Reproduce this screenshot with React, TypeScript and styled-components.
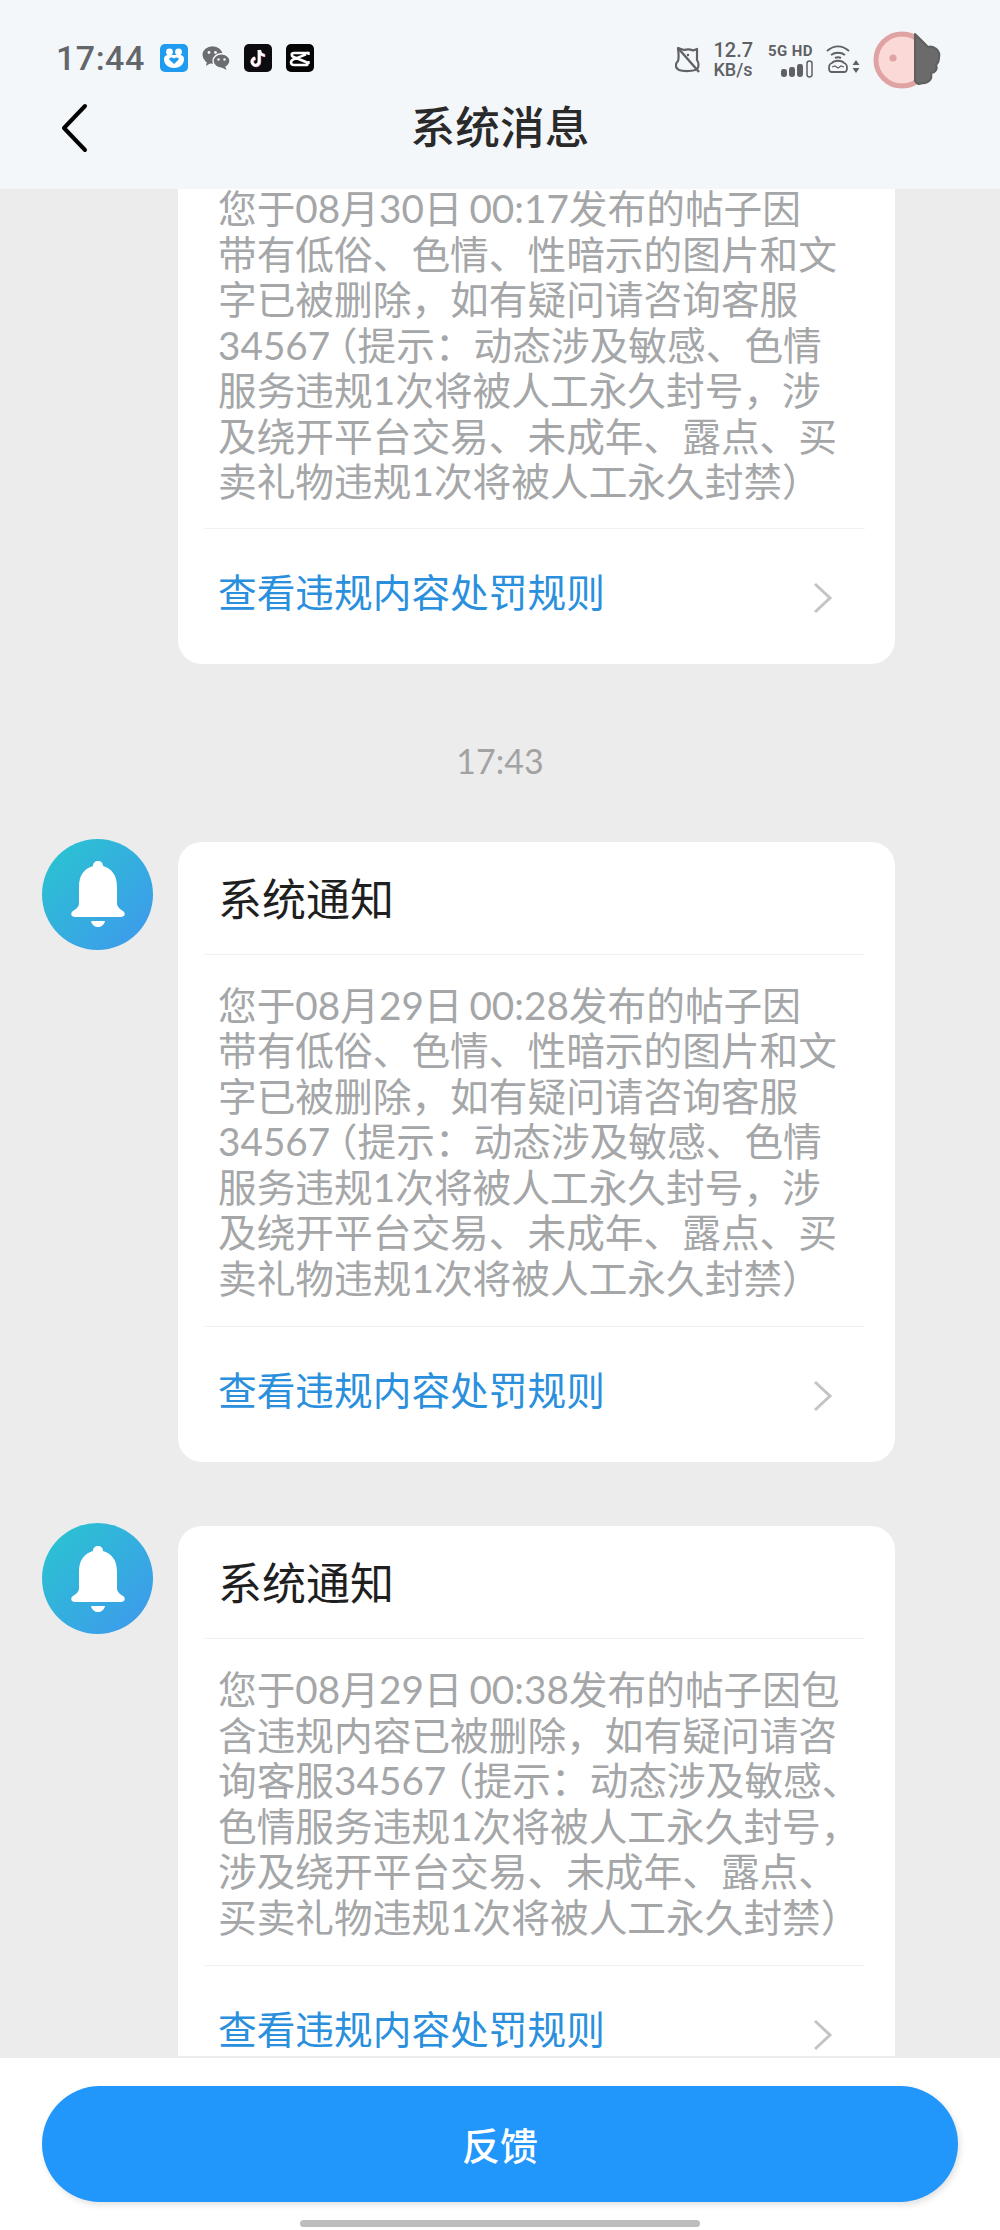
import React from "react";
import styled, { createGlobalStyle } from "styled-components";

const CJK = `Lato, "Noto Sans CJK SC", "Noto Sans", sans-serif`;

const GlobalStyle = createGlobalStyle`
  html, body {
    margin: 0;
    padding: 0;
    background: #ececec;
  }
  * {
    box-sizing: border-box;
  }
`;

const BackIcon = () => (
  <svg width="30" height="50" viewBox="0 0 30 50">
    <path d="M25 3 L4 25 L25 47" fill="none" stroke="#000" strokeWidth="4" strokeLinecap="round" strokeLinejoin="round" />
  </svg>
);

const ChevronIcon = () => (
  <svg width="20" height="32" viewBox="0 0 20 32">
    <path d="M2 2 L17 16 L2 30" fill="none" stroke="#c4c4c4" strokeWidth="3" />
  </svg>
);

const BellIcon = () => (
  <svg width="56" height="66" viewBox="0 0 56 66">
    <path
      d="M28 0 C31 0 33 2 33 5 C42 8 47 14 47 26 L47 42 C47 46 50 48 53 50 C56 52 55 56 51 56 L5 56 C1 56 0 52 3 50 C6 48 9 46 9 42 L9 26 C9 14 14 8 23 5 C23 2 25 0 28 0 Z"
      fill="#fff"
    />
    <path d="M21 60 L35 60 C34 64 31 66 28 66 C25 66 22 64 21 60 Z" fill="#fff" />
  </svg>
);

const BlueAppIcon = () => (
  <svg width="28" height="28" viewBox="0 0 28 28">
    <rect width="28" height="28" rx="5" fill="#1f9bf0" />
    <circle cx="9.5" cy="8" r="3.4" fill="#fff" />
    <circle cx="18.5" cy="8" r="3.4" fill="#fff" />
    <path d="M4 15 C4 12 6 11 8 11 L20 11 C22 11 24 12 24 15 C24 21 19 24 14 24 C9 24 4 21 4 15 Z" fill="#fff" />
    <path d="M14 20 L9.5 15.8 C8.5 14 11 12.5 14 14.6 C17 12.5 19.5 14 18.5 15.8 Z" fill="#1f9bf0" />
  </svg>
);

const WeChatIcon = () => (
  <svg width="28" height="28" viewBox="0 0 28 28">
    <ellipse cx="10.5" cy="11" rx="10" ry="8.8" fill="#6b6d70" />
    <path d="M5 17 L4 22 L10 18 Z" fill="#6b6d70" />
    <ellipse cx="19.5" cy="17" rx="8.5" ry="7.2" fill="#6b6d70" stroke="#f4f7fa" strokeWidth="1.4" />
    <path d="M23 22 L24.5 26 L19 23 Z" fill="#6b6d70" />
    <circle cx="7" cy="8.5" r="1.4" fill="#f4f7fa" />
    <circle cx="13.5" cy="8.5" r="1.4" fill="#f4f7fa" />
    <circle cx="16.5" cy="15.5" r="1.2" fill="#f4f7fa" />
    <circle cx="22.5" cy="15.5" r="1.2" fill="#f4f7fa" />
  </svg>
);

const TikTokIcon = () => (
  <svg width="28" height="28" viewBox="0 0 28 28">
    <rect width="28" height="28" rx="5" fill="#0b0b10" />
    <path d="M15 6 L15 17.5 A3.6 3.6 0 1 1 11 14" fill="none" stroke="#f2a3b6" strokeWidth="2.8" transform="translate(0.8 0.6)" />
    <path d="M15 6 C15.5 9 17.5 11 20.5 11.2" fill="none" stroke="#f2a3b6" strokeWidth="2.8" transform="translate(0.8 0.6)" />
    <path d="M15 6 L15 17.5 A3.6 3.6 0 1 1 11 14" fill="none" stroke="#fff" strokeWidth="2.8" />
    <path d="M15 6 C15.5 9 17.5 11 20.5 11.2" fill="none" stroke="#fff" strokeWidth="2.8" />
  </svg>
);

const CapCutIcon = () => (
  <svg width="28" height="28" viewBox="0 0 28 28">
    <rect width="28" height="28" rx="5" fill="#050505" />
    <path
      d="M22 9 L8 9 C5 9 5 12 7.5 13 L20 18 C22 19 22 21 20 21 L8 21 C6 21 5 20 5 18.5 C5 17 6 16 7.5 15.4 L20 10.4"
      fill="none"
      stroke="#fff"
      strokeWidth="2.6"
    />
    <path d="M22.6 7.8 L22.6 11 M22.6 17 L22.6 20" stroke="#fff" strokeWidth="2.2" />
  </svg>
);

const MuteIcon = () => (
  <svg width="27" height="28" viewBox="0 0 27 28">
    <path
      d="M3 2 L9 4 C12 3 15 3 18 4.5 L22 3 L22 14 C24 17 24 21 22 23 C19 25.5 8 25.5 4 24 C0 22 0 18 3 15 C4 12 3.5 6 3 2 Z"
      fill="none"
      stroke="#5f6164"
      strokeWidth="2.2"
      strokeLinejoin="round"
    />
    <path d="M3 2 L24 26" stroke="#5f6164" strokeWidth="2.4" />
    <circle cx="13" cy="9" r="1.2" fill="#5f6164" />
  </svg>
);

const SignalIcon = () => (
  <svg width="32" height="18" viewBox="0 0 32 18">
    <rect x="0" y="9" width="6" height="8" rx="2.4" fill="#5f6164" />
    <rect x="8" y="7" width="6" height="10" rx="2.4" fill="#5f6164" />
    <rect x="16" y="4" width="6" height="13" rx="2.4" fill="#5f6164" />
    <rect x="26" y="1" width="5" height="16" rx="2.4" fill="none" stroke="#5f6164" strokeWidth="1.5" />
  </svg>
);

const RouterIcon = () => (
  <svg width="34" height="30" viewBox="0 0 34 30">
    <path d="M1 6 C8 0 16 0 23 6" fill="none" stroke="#5f6164" strokeWidth="2" />
    <path d="M5 10 C9 7 15 7 19 10" fill="none" stroke="#5f6164" strokeWidth="2" />
    <path d="M9 13 C11 12 13 12 15 13" fill="none" stroke="#5f6164" strokeWidth="2" />
    <path d="M6 18 C8 15 16 15 18 18 C22 19 22 27 18 27 L6 27 C2 27 2 19 6 18 Z" fill="none" stroke="#5f6164" strokeWidth="1.8" />
    <path d="M6 22 L9 21 L12 23 L15 21 L18 22" fill="none" stroke="#5f6164" strokeWidth="1.3" />
    <path d="M30 15 L33.5 20 L26.5 20 Z M30 28 L33.5 23 L26.5 23 Z" fill="#5f6164" />
  </svg>
);

const PigIcon = () => (
  <svg width="72" height="60" viewBox="0 0 72 60">
    <circle cx="29" cy="30" r="26" fill="#fbd9d6" stroke="#dfa3a3" strokeWidth="5" />
    <circle cx="20" cy="28" r="3.6" fill="#dfa3a3" />
    <path
      d="M42 4 L55 17 C60 15 68 20 66 28 C66 32 65 33 63 35 C65 39 62 43 58 43 C60 50 54 54 49 53 C46 55 44 54 42 51 Z"
      fill="#6b6b6b"
      stroke="#5f5f5f"
      strokeWidth="2"
      strokeLinejoin="round"
    />
  </svg>
);

const notices = [
  {
    key: "a",
    clipped: true,
    lines: [
      "您于08月30日 00:17发布的帖子因",
      "带有低俗、色情、性暗示的图片和文",
      "字已被删除，如有疑问请咨询客服",
      "34567（提示：动态涉及敏感、色情",
      "服务违规1次将被人工永久封号，涉",
      "及绕开平台交易、未成年、露点、买",
      "卖礼物违规1次将被人工永久封禁）",
    ],
  },
  {
    key: "b",
    time: "17:43",
    clipped: false,
    lines: [
      "您于08月29日 00:28发布的帖子因",
      "带有低俗、色情、性暗示的图片和文",
      "字已被删除，如有疑问请咨询客服",
      "34567（提示：动态涉及敏感、色情",
      "服务违规1次将被人工永久封号，涉",
      "及绕开平台交易、未成年、露点、买",
      "卖礼物违规1次将被人工永久封禁）",
    ],
  },
  {
    key: "c",
    clipped: false,
    lines: [
      "您于08月29日 00:38发布的帖子因包",
      "含违规内容已被删除，如有疑问请咨",
      "询客服34567（提示：动态涉及敏感、",
      "色情服务违规1次将被人工永久封号，",
      "涉及绕开平台交易、未成年、露点、",
      "买卖礼物违规1次将被人工永久封禁）",
    ],
  },
];

// the open paren sets tighter than a full em in the screenshot
const BodyText = ({ text }: { text: string }) => {
  const [before, after] = text.split("（");
  if (after === undefined) return <S.BodyLine>{text}</S.BodyLine>;
  return (
    <S.BodyLine>
      {before}
      <S.OpenParen>（</S.OpenParen>
      {after}
    </S.BodyLine>
  );
};

export default function App() {
  return (
    <S.Page>
      <GlobalStyle />
      <S.Header>
        <S.StatusBar>
          <S.StatusLeft>
            <S.Clock>17:44</S.Clock>
            <S.AppIcons>
              <BlueAppIcon />
              <WeChatIcon />
              <TikTokIcon />
              <CapCutIcon />
            </S.AppIcons>
          </S.StatusLeft>
          <S.StatusRight>
            <MuteIcon />
            <S.Speed>
              <span>12.7</span>
              <span>KB/s</span>
            </S.Speed>
            <S.Network>
              <span>5G HD</span>
              <SignalIcon />
            </S.Network>
            <RouterIcon />
            <PigIcon />
          </S.StatusRight>
        </S.StatusBar>
        <S.NavBar>
          <S.BackButton>
            <BackIcon />
          </S.BackButton>
          <S.NavTitle>系统消息</S.NavTitle>
        </S.NavBar>
      </S.Header>

      <S.List>
        {notices.map((n) => (
          <React.Fragment key={n.key}>
            {n.time && <S.TimeLabel>{n.time}</S.TimeLabel>}
            <S.Row $clipped={n.clipped}>
              <S.AvatarSlot>
                {!n.clipped && (
                  <S.Avatar>
                    <BellIcon />
                  </S.Avatar>
                )}
              </S.AvatarSlot>
              <S.Card $clipped={n.clipped}>
                {!n.clipped && <S.CardTitle>系统通知</S.CardTitle>}
                <S.CardBody $clipped={n.clipped}>
                  {n.lines.map((l) => (
                    <BodyText key={l} text={l} />
                  ))}
                </S.CardBody>
                <S.CardLink>
                  <span>查看违规内容处罚规则</span>
                  <ChevronIcon />
                </S.CardLink>
              </S.Card>
            </S.Row>
          </React.Fragment>
        ))}
      </S.List>

      <S.Footer>
        <S.FeedbackButton>反馈</S.FeedbackButton>
        <S.HomeBar />
      </S.Footer>
    </S.Page>
  );
}

const S = {
  Page: styled.div`
    width: 1000px;
    height: 2230px;
    display: flex;
    flex-direction: column;
    overflow: hidden;
    background: #ececec;
    font-family: ${CJK};
  `,
  Header: styled.header`
    height: 189px;
    flex: none;
    background: #f4f7fa;
    position: relative;
    z-index: 1;
  `,
  StatusBar: styled.div`
    height: 90px;
    padding: 26px 55px 0 56px;
    display: flex;
    justify-content: space-between;
    align-items: center;
  `,
  StatusLeft: styled.div`
    display: flex;
    align-items: center;
    gap: 15px;
  `,
  Clock: styled.span`
    font-family: Roboto, sans-serif;
    font-size: 34px;
    font-weight: 500;
    color: #63666a;
    letter-spacing: 0.5px;
  `,
  AppIcons: styled.div`
    display: flex;
    align-items: center;
    gap: 14px;
  `,
  StatusRight: styled.div`
    display: flex;
    align-items: center;
    gap: 13px;
    padding-top: 4px;
    color: #5f6164;
    font-family: Roboto, sans-serif;
  `,
  Speed: styled.div`
    display: flex;
    flex-direction: column;
    align-items: flex-start;
    margin: 0 2px 0 -2px;
    font-size: 18px;
    line-height: 19px;
    font-weight: 500;
    & > span:first-child {
      font-size: 20px;
    }
  `,
  Network: styled.div`
    display: flex;
    flex-direction: column;
    align-items: flex-end;
    font-size: 15px;
    line-height: 17px;
    font-weight: 700;
    letter-spacing: 0.4px;
  `,
  NavBar: styled.div`
    position: relative;
    height: 80px;
    padding-bottom: 6px;
    display: flex;
    align-items: center;
    justify-content: center;
  `,
  BackButton: styled.div`
    position: absolute;
    left: 60px;
    top: 13px;
    line-height: 0;
  `,
  NavTitle: styled.h1`
    margin: 0;
    font-size: 44.7px;
    font-weight: 500;
    color: #2a2a2a;
    line-height: 60px;
  `,
  List: styled.main`
    flex: 1;
    min-height: 0;
    overflow: hidden;
    display: flex;
    flex-direction: column;
    padding: 0 105px 0 42px;
  `,
  TimeLabel: styled.div`
    flex: none;
    height: 178px;
    padding-top: 70px;
    padding-left: 63px;
    text-align: center;
    font-size: 34px;
    line-height: 54px;
    color: #a3a3a3;
  `,
  Row: styled.section<{ $clipped?: boolean }>`
    flex: none;
    display: flex;
    gap: 25px;
    margin-bottom: ${(p) => (p.$clipped ? 0 : 64)}px;
  `,
  AvatarSlot: styled.div`
    flex: none;
    width: 111px;
  `,
  Avatar: styled.div`
    width: 111px;
    height: 111px;
    margin-top: -3px;
    border-radius: 50%;
    background: linear-gradient(135deg, #29c6cf 0%, #3f97ee 100%);
    display: flex;
    align-items: center;
    justify-content: center;
  `,
  Card: styled.article<{ $clipped?: boolean }>`
    flex: none;
    width: 717px;
    padding: 0 30px 0 26px;
    background: #fff;
    border-radius: ${(p) => (p.$clipped ? "0 0 24px 24px" : "24px")};
  `,
  CardTitle: styled.h2`
    margin: 0;
    height: 113px;
    padding: 27px 0 0 14px;
    font-size: 44px;
    font-weight: 400;
    line-height: 60px;
    color: #1f1f1f;
    border-bottom: 1px solid #f1f1f1;
  `,
  CardBody: styled.div<{ $clipped?: boolean }>`
    margin-top: ${(p) => (p.$clipped ? -3 : 0)}px;
    padding: ${(p) => (p.$clipped ? 0 : 28)}px 0 ${(p) => (p.$clipped ? 23 : 25)}px 14px;
    border-bottom: 1px solid #f1f1f1;
    font-size: 38.7px;
    line-height: 45.5px;
    font-weight: 400;
    word-spacing: -3px;
    color: #a4a6a8;
  `,
  BodyLine: styled.div`
    white-space: nowrap;
  `,
  OpenParen: styled.span`
    font-feature-settings: "halt";
    margin-left: 8px;
  `,
  CardLink: styled.div`
    height: 135px;
    padding: 30px 0 0 14px;
    display: flex;
    justify-content: space-between;
    align-items: flex-start;
    font-size: 38.7px;
    line-height: 66px;
    color: #2a8fdd;
    & > svg {
      margin: 23px 32px 0 0;
    }
  `,
  Footer: styled.footer`
    flex: none;
    height: 174px;
    padding: 28px 42px 0;
    background: #fff;
    border-top: 2px solid #ececec;
    position: relative;
    z-index: 1;
  `,
  FeedbackButton: styled.div`
    height: 116px;
    padding-bottom: 2px;
    border-radius: 58px;
    background: #2196fb;
    color: #fff;
    font-size: 38px;
    font-weight: 500;
    display: flex;
    align-items: center;
    justify-content: center;
    box-shadow: 2px 3px 6px rgba(0, 0, 0, 0.12);
  `,
  HomeBar: styled.div`
    width: 400px;
    height: 7px;
    margin: 18px auto 0;
    border-radius: 4px;
    background: #bdbdbd;
  `,
};
